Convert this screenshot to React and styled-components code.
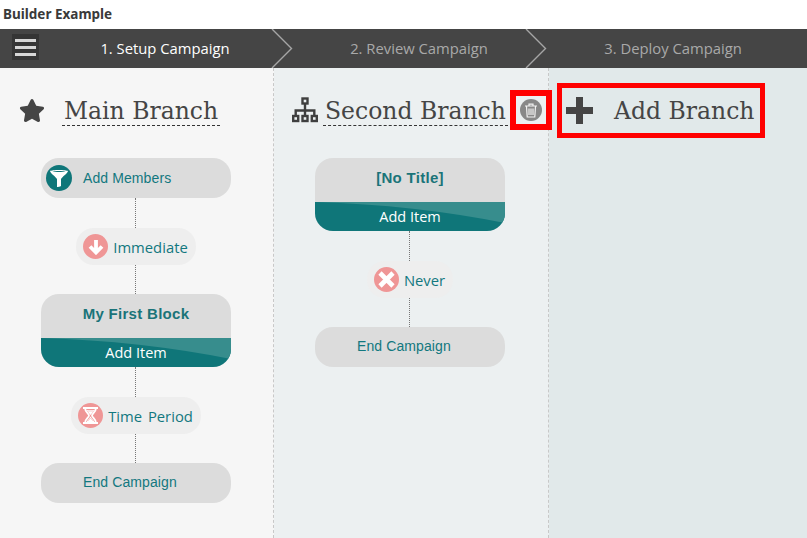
import React from "react";
import styled, { createGlobalStyle } from "styled-components";
import { FaStar } from "react-icons/fa";

const Global = createGlobalStyle`
  html, body { margin: 0; padding: 0; background: #fff; }
  body { width: 807px; height: 538px; overflow: hidden; font-family: "Liberation Sans", Arial, sans-serif; }
  * { box-sizing: border-box; }
`;

const Page = styled.div`display:flex;flex-direction:column;width:807px;height:538px;`;
const PageTitle = styled.h1`
  margin:0;height:29px;padding:6px 0 0 3px;font:700 13.5px/17px "Noto Sans",Tahoma,sans-serif;color:#3a3a3a;
`;
const Nav = styled.nav`display:flex;align-items:center;height:39px;background:#454545;padding-left:12px;`;
const MenuButton = styled.button`
  display:flex;flex-direction:column;justify-content:center;gap:4px;width:27px;height:26px;padding:0 3px;
  margin-top:-3px;border:0;background:#353535;
`;
const MenuBar = styled.span`display:block;height:3px;background:#d6d6d6;`;
const Steps = styled.ol`display:flex;margin:0 0 0 -1px;padding:0;list-style:none;`;
const Step = styled.li`
  position:relative;display:flex;align-items:center;justify-content:center;width:254px;height:39px;padding-bottom:2px;
  font:14.8px/20px "Open Sans",Tahoma,sans-serif;color:${p => (p.$active ? "#ffffff" : "#a9a9a9")};
`;
const Chevron = styled.svg`position:absolute;right:-1px;top:0;width:22px;height:39px;`;

const Columns = styled.main`display:grid;grid-template-columns:274px 275px 258px;flex:1;min-height:0;`;
const Column = styled.section`
  position:relative;z-index:${p => p.$z || 0};background:${p => p.$bg};
  border-right:${p => (p.$last ? "0" : "1px dashed #c8c8c8")};
`;
const HeadRow = styled.header`
  display:flex;align-items:center;height:54px;margin:15px 0 21px;padding-left:${p => p.$pad}px;gap:${p => p.$gap}px;
`;
const HeadIcon = styled.span`display:flex;flex:none;width:26px;height:26px;margin-top:-1px;color:#454545;`;
const BranchTitle = styled.h2`
  margin:0;padding:4px 2px 0 2px;font:400 23.5px/27px "DejaVu Serif",serif;color:#454545;white-space:nowrap;
  border-bottom:1px dashed #333;
`;
const TrashBox = styled.button`
  display:flex;align-items:center;justify-content:center;flex:none;width:42px;height:40px;padding:0;margin-left:-3px;
  background:transparent;border:6px solid #ff0000;
`;
const TrashCircle = styled.span`display:flex;align-items:center;justify-content:center;width:22px;height:22px;border-radius:50%;background:#888;`;
const AddBox = styled.button`
  display:flex;align-items:center;flex:none;width:208px;height:55px;margin-left:8px;padding:0 0 0 4px;gap:21px;
  background:transparent;border:5px solid #ff0000;
  font:400 23.5px/29px "DejaVu Serif",serif;color:#454545;
`;
const AddLabel = styled.span`padding-top:2px;`;
const Flow = styled.div`display:flex;flex-direction:column;align-items:center;width:190px;margin-left:41px;`;
const Link = styled.div`width:1px;height:${p => p.$h}px;border-left:1px dotted #777;margin-right:1px;`;
const Terminal = styled.div`
  display:flex;align-items:center;gap:11px;align-self:stretch;height:40px;border-radius:18px;background:#dcdcdc;
  padding:0 0 ${p => (p.$icon ? 1 : 3)}px ${p => (p.$icon ? 5 : 42)}px;font-size:14px;letter-spacing:.1px;color:#12787f;
`;
const TealCircle = styled.span`display:flex;align-items:center;justify-content:center;width:26px;height:26px;border-radius:50%;background:#0f7679;`;
const Pill = styled.div`
  display:flex;align-items:center;gap:5px;height:37px;padding:0 8px 0 7px;border-radius:18px;background:#eeeeee;
  font:14.8px/20px "Open Sans",Tahoma,sans-serif;color:#12787f;word-spacing:${p => p.$ws || 0}px;
`;
const PinkCircle = styled.span`display:flex;align-items:center;justify-content:center;flex:none;width:25px;height:25px;border-radius:50%;background:#ef9696;`;
const Block = styled.article`align-self:stretch;height:73px;border-radius:18px;overflow:hidden;background:#dcdcdc;`;
const BlockTitle = styled.div`
  display:flex;justify-content:center;height:44px;padding-top:11px;font:700 15px/18px "Liberation Sans",Arial,sans-serif;letter-spacing:.3px;color:#1a7479;
`;
const AddItem = styled.div`
  position:relative;display:flex;align-items:center;justify-content:center;height:29px;padding-top:1px;background:#0f7679;
  font:14.5px/20px "Open Sans",Tahoma,sans-serif;color:#fff;
`;
const Swoosh = styled.svg`position:absolute;left:0;top:0;width:100%;height:100%;`;
const ItemLabel = styled.span`position:relative;`;

const Hamburger = () => (
  <MenuButton aria-label="Menu"><MenuBar /><MenuBar /><MenuBar /></MenuButton>
);
const ChevronMark = () => (
  <Chevron viewBox="0 0 22 39"><path d="M1 0 L20.500 19.500 L1 39" fill="none" stroke="#a6a6a6" strokeWidth="1.400" /></Chevron>
);
const Sitemap = () => (
  <svg width="26" height="26" viewBox="0 0 26 26" fill="none" stroke="#3f3f3f" strokeWidth="2.400">
    <rect x="10.500" y="1.500" width="5" height="5" /><rect x="1.200" y="19" width="5" height="5" />
    <rect x="10.500" y="19" width="5" height="5" /><rect x="19.800" y="19" width="5" height="5" />
    <path d="M13 6.500V19M3.700 19v-5.500h18.600V19" />
  </svg>
);
const Trash = () => (
  <svg width="14" height="15" viewBox="0 0 14 15" fill="none" stroke="#f2f2f2" strokeWidth="1.200">
    <path d="M1 3h12M5 3V1.200h4V3M2.500 3.500l.7 10.500h7.600l.7-10.500M5 5.500V12M7 5.500V12M9 5.500V12" />
  </svg>
);
const Plus = () => (
  <svg width="27" height="27" viewBox="0 0 27 27"><path fill="#454545" d="M10 0h7v10h10v7H17v10h-7V17H0v-7h10z" /></svg>
);
const Funnel = () => (
  <svg width="18" height="18" viewBox="0 0 18 18">
    <path fill="#fff" d="M0 2C2 .5 16 .5 18 2 18 4 12 8 11 10v7c-1 .6-3 .9-4 1V10C6 8 0 4 0 2z" />
    <path fill="#0f7679" d="M2.500 2.400c3-.7 10-.7 13 0-3 .8-10 .8-13 0z" />
  </svg>
);
const ArrowDown = () => (
  <svg width="16" height="16" viewBox="0 0 16 16"><path fill="none" stroke="#fff" strokeWidth="3.800" d="M8 1v12M2 7.500 8 13.500 14 7.500" /></svg>
);
const Hourglass = () => (
  <svg width="15" height="17" viewBox="0 0 15 17" fill="none" stroke="#fff" strokeWidth="1.800">
    <path d="M0 1h15M0 16h15M2 1c0 4 4 5.500 4 7.500S2 12 2 16M13 1c0 4-4 5.500-4 7.500s4 3.500 4 7.500" />
    <path fill="#fff" stroke="none" d="M3.500 3h8L7.500 8zM3.500 15 7.500 9.500 11.500 15z" />
    <path stroke="#f7c9c9" strokeWidth="1" d="M4.500 4h6M5 13.800 7.500 11 10 13.800" />
  </svg>
);
const Cross = () => (
  <svg width="17" height="17" viewBox="0 0 17 17"><path stroke="#fff" strokeWidth="4.600" d="M2 2l13 13M15 2 2 15" /></svg>
);
const Band = () => (
  <AddItem>
    <Swoosh viewBox="0 0 190 29" preserveAspectRatio="none"><path fill="#378d8d" d="M0 0Q100 3 190 21V0Z" /></Swoosh>
    <ItemLabel>Add Item</ItemLabel>
  </AddItem>
);

export default function App() {
  return (
    <Page>
      <Global />
      <PageTitle>Builder Example</PageTitle>
      <Nav>
        <Hamburger />
        <Steps>
          <Step $active>1. Setup Campaign<ChevronMark /></Step>
          <Step>2. Review Campaign<ChevronMark /></Step>
          <Step>3. Deploy Campaign</Step>
        </Steps>
      </Nav>
      <Columns>
        <Column $bg="#f6f6f6">
          <HeadRow $pad={19} $gap={17}>
            <HeadIcon><FaStar size={27} /></HeadIcon>
            <BranchTitle>Main Branch</BranchTitle>
          </HeadRow>
          <Flow>
            <Terminal $icon><TealCircle><Funnel /></TealCircle>Add Members</Terminal>
            <Link $h={30} />
            <Pill><PinkCircle><ArrowDown /></PinkCircle>Immediate</Pill>
            <Link $h={29} />
            <Block><BlockTitle>My First Block</BlockTitle><Band /></Block>
            <Link $h={30} />
            <Pill $ws={2}><PinkCircle><Hourglass /></PinkCircle>Time Period</Pill>
            <Link $h={29} />
            <Terminal>End Campaign</Terminal>
          </Flow>
        </Column>
        <Column $bg="#ecf0f1" $z={1}>
          <HeadRow $pad={18} $gap={5}>
            <HeadIcon><Sitemap /></HeadIcon>
            <BranchTitle>Second Branch</BranchTitle>
            <TrashBox aria-label="Delete branch"><TrashCircle><Trash /></TrashCircle></TrashBox>
          </HeadRow>
          <Flow>
            <Block><BlockTitle>[No Title]</BlockTitle><Band /></Block>
            <Link $h={30} />
            <Pill><PinkCircle><Cross /></PinkCircle>Never</Pill>
            <Link $h={29} />
            <Terminal>End Campaign</Terminal>
          </Flow>
        </Column>
        <Column $bg="#e1e9ea" $last>
          <HeadRow $pad={0} $gap={0}>
            <AddBox><Plus /><AddLabel>Add Branch</AddLabel></AddBox>
          </HeadRow>
        </Column>
      </Columns>
    </Page>
  );
}
